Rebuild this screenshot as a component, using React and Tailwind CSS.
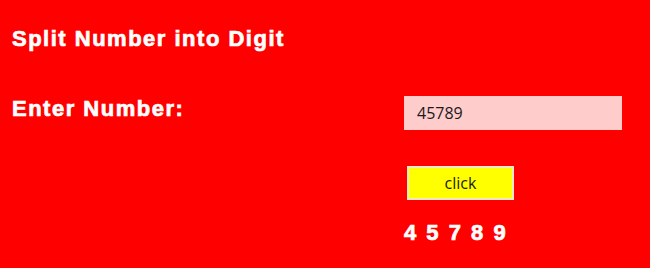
import { useState } from 'react';

export default function App() {
  const [value, setValue] = useState('45789');
  const [digits, setDigits] = useState('45789'.split(''));

  return (
    <div className="h-[268px] w-[650px] overflow-hidden bg-[#ff0000] pl-[12px] pt-[27px] font-['Liberation_Sans',Arial,sans-serif] text-white">
      <h1 className="text-[22px] font-bold leading-[24px] tracking-[1.5px] [-webkit-text-stroke:0.7px_white]">
        Split Number into Digit
      </h1>

      <div className="mt-[46px] flex items-start">
        <label className="w-[392px] shrink-0 text-[22px] font-bold leading-[24px] tracking-[1.5px] [-webkit-text-stroke:0.7px_white]">
          Enter Number:
        </label>
        <input
          value={value}
          onChange={(e) => setValue(e.target.value)}
          className="-mt-px h-[34px] w-[218px] bg-[#ffcccc] pl-[13px] font-['Open_Sans',sans-serif] text-[16px] text-[#1a1a1a] outline-none"
        />
      </div>

      <div className="ml-[395px] mt-[36px] flex flex-col items-start gap-[21px]">
        <button
          onClick={() => setDigits(value.split(''))}
          className="h-[34px] w-[107px] border-2 border-[#f3e9c6] bg-[#ffff00] font-['Open_Sans',sans-serif] text-[16px] text-[#1a1a1a]"
        >
          click
        </button>
        <div className="-ml-[3px] text-[22px] font-bold leading-[24px] tracking-[2px] [-webkit-text-stroke:0.7px_white]">
          {digits.join(' ')}
        </div>
      </div>
    </div>
  );
}
